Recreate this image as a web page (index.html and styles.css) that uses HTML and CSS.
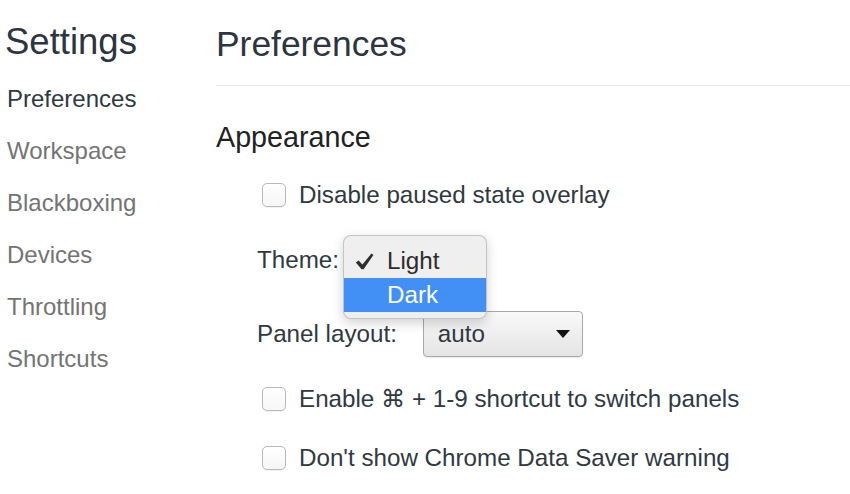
FILE: index.html
```html
<!DOCTYPE html>
<html>
<head>
<meta charset="utf-8">
<link rel="stylesheet" href="styles.css">
</head>
<body>
<div class="page">
  <nav class="sidebar">
    <div class="sidebar-title">Settings</div>
    <ul class="nav">
      <li class="nav-item active">Preferences</li>
      <li class="nav-item">Workspace</li>
      <li class="nav-item">Blackboxing</li>
      <li class="nav-item">Devices</li>
      <li class="nav-item">Throttling</li>
      <li class="nav-item">Shortcuts</li>
    </ul>
  </nav>
  <main class="main">
    <header class="main-header"><h1 class="main-title">Preferences</h1></header>
    <section class="section">
      <h2 class="section-title">Appearance</h2>
      <div class="rows">
        <div class="row row-check"><span class="checkbox"></span><span class="label">Disable paused state overlay</span></div>
        <div class="row row-select">
          <span class="label">Theme:</span>
          <span class="select-slot">
            <div class="popup">
              <div class="popup-item"><svg class="check" width="19" height="17" viewBox="0 0 19 17"><path d="M0.8 9.6 L3.6 7.4 L7.4 11.6 L16.4 0.6 L18.4 2 L8.6 16.2 L6.6 16.2 Z" fill="#2e2e2e"/></svg><span class="popup-text">Light</span></div>
              <div class="popup-item selected"><span class="popup-text">Dark</span></div>
            </div>
          </span>
        </div>
        <div class="row row-select row-gap-lg">
          <span class="label">Panel layout:</span>
          <span class="select"><span class="select-text">auto</span><span class="caret"></span></span>
        </div>
        <div class="row row-check"><span class="checkbox"></span><span class="label">Enable ⌘ + 1-9 shortcut to switch panels</span></div>
        <div class="row row-check row-gap-sm"><span class="checkbox"></span><span class="label">Don't show Chrome Data Saver warning</span></div>
      </div>
    </section>
  </main>
</div>
</body>
</html>
```
FILE: styles.css
```css
* { box-sizing: border-box; }
html, body { margin: 0; padding: 0; background: #ffffff; }
body {
  font-family: "Liberation Sans", "DejaVu Sans", Arial, sans-serif;
  color: #303942;
  width: 850px;
  height: 494px;
  overflow: hidden;
}
.page { display: flex; height: 494px; }
.sidebar { width: 216px; flex: none; padding: 18px 0 0 7px; }
.sidebar-title { font-size: 36.5px; line-height: 48px; margin-left: -2px; color: #2c3540; }
.nav { list-style: none; margin: 7px 0 0; padding: 0; }
.nav-item { font-size: 24px; line-height: 52px; color: #747474; }
.nav-item.active { color: #303942; }
.main { flex: 1; min-width: 0; }
.main-header { padding: 20px 0 17px; border-bottom: 1px solid #e7e7e7; }
.main-title { margin: 0 0 0 0; font-size: 35.4px; line-height: 48px; font-weight: normal; color: #2c3540; }
.section { padding-left: 41px; }
.section-title { margin: 31px 0 0 -41px; font-size: 28.7px; line-height: 40px; font-weight: normal; color: #222222; }
.rows { display: flex; flex-direction: column; }
.row { display: flex; align-items: center; font-size: 24.2px; margin-top: 21px; }
.row-check { height: 40px; padding-left: 5px; }
.row-check:first-child { margin-top: 18px; }
.row-select { height: 48px; }
.row-gap-lg { margin-top: 26px; }
.row-gap-sm { margin-top: 19px; }
.checkbox {
  width: 24px; height: 24px; flex: none;
  border: 1px solid #b9b9b9; border-radius: 5px;
  background: linear-gradient(#ffffff, #f6f6f6);
  box-shadow: 0 0.5px 1px rgba(0,0,0,0.06);
  margin-right: 13px;
}
.label { white-space: nowrap; }
.select-slot { position: relative; width: 100px; height: 46px; margin-left: 4px; }
.popup {
  position: absolute; left: 0; top: -2px;
  width: 144px; height: 84px;
  padding: 8px 0;
  background: #efefef;
  border: 1px solid rgba(0,0,0,0.18);
  border-radius: 8px;
  box-shadow: 0 4px 12px rgba(0,0,0,0.18);
  z-index: 2;
}
.popup-item { position: relative; height: 34px; line-height: 34px; padding-left: 43px; color: #2c2c2c; }
.popup-item.selected { background: #4290f6; color: #ffffff; }
.check { position: absolute; left: 11px; top: 9px; }
.select {
  display: flex; align-items: center; justify-content: space-between;
  width: 160px; height: 46px; margin-left: 26px;
  padding: 0 12px 0 14px;
  border: 1px solid #a9a9a9; border-radius: 4px;
  background: linear-gradient(#f9f9f9, #e4e4e4);
  box-shadow: 0 1px 1px rgba(0,0,0,0.08);
  color: #303942;
}
.caret {
  width: 0; height: 0;
  border-left: 7.5px solid transparent;
  border-right: 7.5px solid transparent;
  border-top: 8px solid #111111;
}
```
